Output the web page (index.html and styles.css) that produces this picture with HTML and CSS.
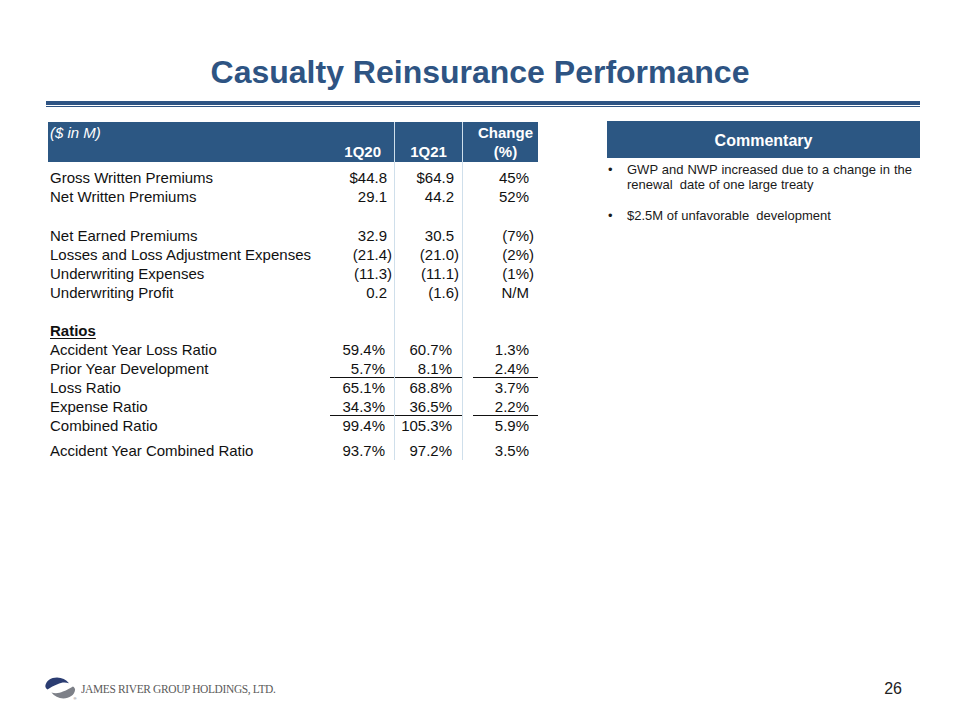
FILE: index.html
```html
<!DOCTYPE html>
<html lang="en">
<head>
<meta charset="utf-8">
<title>Casualty Reinsurance Performance</title>
<link rel="stylesheet" href="styles.css">
</head>
<body>
<div class="slide">
  <header class="title-block">
    <h1 class="title">Casualty Reinsurance Performance</h1>
    <div class="rule"></div>
  </header>

  <main class="content">
    <table class="fin">
      <colgroup>
        <col class="w-label">
        <col class="w-c1">
        <col class="w-c2">
        <col class="w-c3">
      </colgroup>
      <thead>
        <tr class="head">
          <th class="h-label">($ in M)</th>
          <th class="h-c1">1Q20</th>
          <th class="h-c2 c2">1Q21</th>
          <th class="h-c3">Change<br>(%)</th>
        </tr>
      </thead>
      <tbody>
        <tr class="first">
          <td class="lbl">Gross Written Premiums</td>
          <td class="num c1">$44.8<span class="pad">)</span></td>
          <td class="num c2">$64.9<span class="pad">)</span></td>
          <td class="num c3">45%<span class="pad">)</span></td>
        </tr>
        <tr>
          <td class="lbl">Net Written Premiums</td>
          <td class="num c1">29.1<span class="pad">)</span></td>
          <td class="num c2">44.2<span class="pad">)</span></td>
          <td class="num c3">52%<span class="pad">)</span></td>
        </tr>
        <tr class="blank"><td></td><td></td><td class="c2"></td><td></td></tr>
        <tr>
          <td class="lbl">Net Earned Premiums</td>
          <td class="num c1">32.9<span class="pad">)</span></td>
          <td class="num c2">30.5<span class="pad">)</span></td>
          <td class="num c3">(7%)</td>
        </tr>
        <tr>
          <td class="lbl">Losses and Loss Adjustment Expenses</td>
          <td class="num c1">(21.4)</td>
          <td class="num c2">(21.0)</td>
          <td class="num c3">(2%)</td>
        </tr>
        <tr>
          <td class="lbl">Underwriting Expenses</td>
          <td class="num c1">(11.3)</td>
          <td class="num c2">(11.1)</td>
          <td class="num c3">(1%)</td>
        </tr>
        <tr>
          <td class="lbl">Underwriting Profit</td>
          <td class="num c1">0.2<span class="pad">)</span></td>
          <td class="num c2">(1.6)</td>
          <td class="num c3">N/M<span class="pad">)</span></td>
        </tr>
        <tr class="blank"><td></td><td></td><td class="c2"></td><td></td></tr>
        <tr>
          <td class="lbl"><span class="section">Ratios</span></td>
          <td></td>
          <td class="c2"></td>
          <td></td>
        </tr>
        <tr>
          <td class="lbl">Accident Year Loss Ratio</td>
          <td class="num c1 pct">59.4%<span class="pad">)</span></td>
          <td class="num c2 pct">60.7%<span class="pad">)</span></td>
          <td class="num c3">1.3%<span class="pad">)</span></td>
        </tr>
        <tr class="ruled">
          <td class="lbl">Prior Year Development</td>
          <td class="num c1 pct">5.7%<span class="pad">)</span></td>
          <td class="num c2 pct">8.1%<span class="pad">)</span></td>
          <td class="num c3">2.4%<span class="pad">)</span></td>
        </tr>
        <tr>
          <td class="lbl">Loss Ratio</td>
          <td class="num c1 pct">65.1%<span class="pad">)</span></td>
          <td class="num c2 pct">68.8%<span class="pad">)</span></td>
          <td class="num c3">3.7%<span class="pad">)</span></td>
        </tr>
        <tr class="ruled">
          <td class="lbl">Expense Ratio</td>
          <td class="num c1 pct">34.3%<span class="pad">)</span></td>
          <td class="num c2 pct">36.5%<span class="pad">)</span></td>
          <td class="num c3">2.2%<span class="pad">)</span></td>
        </tr>
        <tr>
          <td class="lbl">Combined Ratio</td>
          <td class="num c1 pct">99.4%<span class="pad">)</span></td>
          <td class="num c2 pct">105.3%<span class="pad">)</span></td>
          <td class="num c3">5.9%<span class="pad">)</span></td>
        </tr>
        <tr class="last">
          <td class="lbl">Accident Year Combined Ratio</td>
          <td class="num c1 pct">93.7%<span class="pad">)</span></td>
          <td class="num c2 pct">97.2%<span class="pad">)</span></td>
          <td class="num c3">3.5%<span class="pad">)</span></td>
        </tr>
      </tbody>
    </table>

    <section class="commentary">
      <div class="comm-head">Commentary</div>
      <ul class="comm-list">
        <li><span class="bullet">•</span><span class="comm-text">GWP and NWP increased due to a change in the renewal&nbsp; date of one large treaty</span></li>
        <li><span class="bullet">•</span><span class="comm-text">$2.5M of unfavorable&nbsp; development</span></li>
      </ul>
    </section>
  </main>

  <footer class="footer">
    <div class="logo">
      <svg class="logo-mark" width="32" height="23" viewBox="0 0 32 23" aria-hidden="true">
        <path d="M0.3 9 C1 3.5 6 0.4 12 0.4 C17 0.4 21 2.5 24 6.2 C20 5 16 5.5 12.5 7.2 C8.5 9 5 10.6 2.5 12.4 C1.1 11.7 0.4 10.5 0.3 9 Z" fill="#2b3d72"/>
        <path d="M0.3 9 C1 3.5 6 0.4 12 0.4 C17 0.4 21 2.5 24 6.2 C20 5 16 5.5 12.5 7.2 C8.5 9 5 10.6 2.5 12.4 C1.1 11.7 0.4 10.5 0.3 9 Z" fill="#7d8088" transform="rotate(180 15.2 10.9)"/>
        <text x="28.6" y="22.8" class="reg">®</text>
      </svg>
      <span class="logo-text">JAMES RIVER GROUP HOLDINGS, LTD.</span>
    </div>
    <div class="page-num">26</div>
  </footer>
</div>
</body>
</html>
```

FILE: styles.css
```css
* { box-sizing: border-box; }

html, body {
  margin: 0;
  padding: 0;
  background: #ffffff;
}

body {
  font-family: "Liberation Sans", Arial, sans-serif;
  color: #111111;
}

.slide {
  width: 960px;
  height: 720px;
  display: flex;
  flex-direction: column;
  overflow: hidden;
}

.title-block {
  padding-top: 56px;
}

.title {
  margin: 0;
  font-size: 32px;
  line-height: 32px;
  font-weight: 700;
  text-align: center;
  color: #2e5483;
}

.rule {
  margin: 13px 40px 0 46px;
  height: 6px;
  border-top: 4px solid #2e5483;
  border-bottom: 1px solid #2e5483;
}

.content {
  display: flex;
  align-items: flex-start;
  padding-top: 14px;
}

/* ---------- table ---------- */
.fin {
  margin-left: 48px;
  margin-top: 1px;
  width: 490px;
  table-layout: fixed;
  border-collapse: separate;
  border-spacing: 0;
  font-size: 15px;
  line-height: 19px;
}

.w-label { width: 282px; }
.w-c1 { width: 64px; }
.w-c2 { width: 69px; }
.w-c3 { width: 75px; }

.fin th,
.fin td {
  padding: 0;
  white-space: nowrap;
}

.head th {
  height: 40px;
  background: #2c5783;
  color: #ffffff;
  font-weight: 700;
}

.h-label {
  text-align: left;
  vertical-align: top;
  padding: 1px 0 0 2px !important;
  font-weight: 400 !important;
  font-style: italic;
}

.h-c1 {
  text-align: right;
  vertical-align: bottom;
  padding: 0 13px 1px 0 !important;
}

.h-c2 {
  text-align: center;
  vertical-align: bottom;
  padding: 0 0 1px 0 !important;
}

.h-c3 {
  text-align: center;
  vertical-align: top;
  padding: 1px 0 0 10px !important;
}

.fin tbody tr { height: 19px; }

.fin tbody tr.first td { padding-top: 6px; }
.fin tbody tr.first { height: 25px; }

.fin tbody tr.blank { height: 19.5px; }

.fin tbody tr.last td { padding-top: 6px; }
.fin tbody tr.last { height: 25px; }

.c2 {
  border-left: 1px solid #cfdfeb;
  border-right: 1px solid #cfdfeb;
}

.lbl {
  text-align: left;
  padding-left: 2px !important;
}

.num { text-align: right; }
.num.c1 { padding-right: 2px !important; }
.num.c2 { padding-right: 3px !important; }
.num.c3 { padding-right: 4px !important; }
.num.pct .pad { margin-left: 2px; }

.pad { visibility: hidden; }

.section {
  font-weight: 700;
  text-decoration: underline;
  text-underline-offset: 2px;
}

.ruled .c1,
.ruled .c2 {
  background: linear-gradient(#111111, #111111) left bottom / 100% 1px no-repeat;
}

.ruled .c3 {
  background: linear-gradient(#111111, #111111) right bottom / calc(100% - 10px) 1px no-repeat;
}

/* ---------- commentary ---------- */
.commentary {
  margin-left: 69px;
  width: 313px;
}

.comm-head {
  height: 37px;
  background: #2c5783;
  color: #ffffff;
  font-weight: 700;
  font-size: 16px;
  display: flex;
  align-items: center;
  justify-content: center;
  padding-top: 2px;
}

.comm-list {
  list-style: none;
  margin: 4px 0 0 0;
  padding: 0 8px 0 0;
  font-size: 13px;
  line-height: 15px;
  color: #1a1a1a;
}

.comm-list li {
  display: flex;
  margin-bottom: 16px;
}

.bullet {
  flex: 0 0 20px;
  padding-left: 1px;
}

.comm-text {
  flex: 1;
  text-align: justify;
}

/* ---------- footer ---------- */
.footer {
  margin-top: auto;
  margin-bottom: 17px;
  height: 30px;
  display: flex;
  align-items: center;
  padding: 0 58px 0 45px;
}

.logo {
  display: flex;
  align-items: center;
  gap: 4px;
}

.logo-mark { display: block; }

.reg {
  font-family: "Liberation Sans", Arial, sans-serif;
  font-size: 4px;
  fill: #555555;
}

.logo-text {
  font-family: "Liberation Serif", "Times New Roman", serif;
  font-size: 13px;
  letter-spacing: -0.4px;
  color: #5a5a5a;
  padding-top: 2px;
  transform: scaleX(0.88);
  transform-origin: left center;
}

.page-num {
  margin-left: auto;
  font-size: 16px;
  color: #222222;
  padding-top: 2px;
}
```
